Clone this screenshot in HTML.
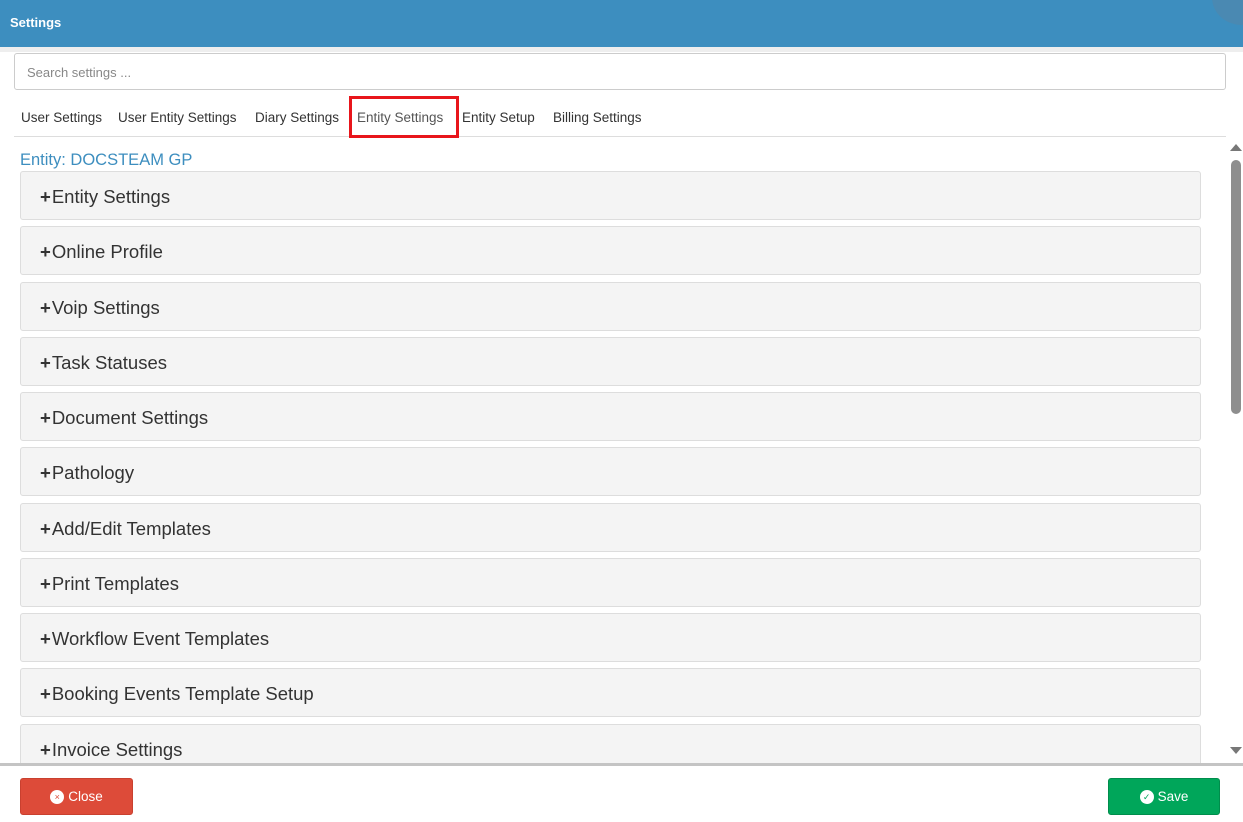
<!DOCTYPE html>
<html><head><style>
*{box-sizing:border-box;margin:0;padding:0}
body{width:1243px;height:822px;overflow:hidden;background:#fff;font-family:"Liberation Sans",sans-serif;position:relative;color:#333}
.hdr{position:absolute;left:0;top:0;width:1243px;height:47px;background:#3d8ebf}
.hdr span{position:absolute;left:10px;top:15px;color:#fff;font-weight:bold;font-size:13px}
.circ{position:absolute;left:1212px;top:-30px;width:60px;height:55px;border-radius:50%;background:#5088ad;opacity:.7}
.strip{position:absolute;left:0;top:47px;width:1243px;height:5px;background:#eee}
.search{position:absolute;left:14px;top:53px;width:1212px;height:37px;border:1px solid #ccc;border-radius:3px;font-size:13px;color:#888;padding:11px 12px}
.tabs{position:absolute;left:14px;top:110px;font-size:13.5px;color:#333;white-space:nowrap}
.tabs span{position:absolute;top:0}
.tabline{position:absolute;left:14px;top:136px;width:1212px;height:1px;background:#ddd}
.redbox{position:absolute;left:349px;top:96px;width:110px;height:42px;border:3px solid #e8151b}
.entity{position:absolute;left:20px;top:151px;color:#3d8ebf;font-size:16.5px}
.panel{position:absolute;left:20px;width:1181px;height:49px;background:#f4f4f4;border:1px solid #ddd;border-radius:3px;font-size:18.5px;color:#333;padding:14px 0 0 19px}
.panel b{font-weight:bold;margin-right:1px}
.sb{position:absolute;left:1229px;top:140px;width:14px;height:624px;background:#fff}
.thumb{position:absolute;left:1231px;top:160px;width:10px;height:254px;background:#8e8e8e;border-radius:5px}
.foot{position:absolute;left:0;top:763px;width:1243px;height:3px;background:#c4c4c4}
.below{position:absolute;left:0;top:766px;width:1243px;height:56px;background:#fff}
.btn{position:absolute;top:778px;height:37px;border-radius:3px;color:#fff;font-size:13.5px;display:flex;align-items:center;justify-content:center}
.ic{display:inline-block;width:14px;height:14px;border-radius:50%;background:#fff;margin-right:4px;font-size:9px;text-align:center;line-height:14px}
</style></head><body>
<div class="hdr"><span>Settings</span><div class="circ"></div></div>
<div class="strip"></div>
<div class="search">Search settings ...</div>
<div class="tabs">
<span style="left:7px">User Settings</span>
<span style="left:104px">User Entity Settings</span>
<span style="left:241px">Diary Settings</span>
<span style="left:343px;color:#555">Entity Settings</span>
<span style="left:448px">Entity Setup</span>
<span style="left:539px">Billing Settings</span>
</div>
<div class="tabline"></div>
<div class="redbox"></div>
<div class="entity">Entity: DOCSTEAM GP</div>
<div class="panel" style="top:171px"><b>+</b>Entity Settings</div>
<div class="panel" style="top:226px"><b>+</b>Online Profile</div>
<div class="panel" style="top:282px"><b>+</b>Voip Settings</div>
<div class="panel" style="top:337px"><b>+</b>Task Statuses</div>
<div class="panel" style="top:392px"><b>+</b>Document Settings</div>
<div class="panel" style="top:447px"><b>+</b>Pathology</div>
<div class="panel" style="top:503px"><b>+</b>Add/Edit Templates</div>
<div class="panel" style="top:558px"><b>+</b>Print Templates</div>
<div class="panel" style="top:613px"><b>+</b>Workflow Event Templates</div>
<div class="panel" style="top:668px"><b>+</b>Booking Events Template Setup</div>
<div class="panel" style="top:724px"><b>+</b>Invoice Settings</div>
<div class="sb"></div>
<div style="position:absolute;left:1230px;top:144px;width:0;height:0;border-left:6px solid transparent;border-right:6px solid transparent;border-bottom:7px solid #777"></div>
<div class="thumb"></div>
<div style="position:absolute;left:1230px;top:747px;width:0;height:0;border-left:6px solid transparent;border-right:6px solid transparent;border-top:7px solid #777"></div>
<div class="below"></div>
<div class="foot"></div>
<div class="btn" style="left:20px;width:113px;background:#dd4b39;border:1px solid #c9402f"><span class="ic" style="color:#dd4b39">×</span>Close</div>
<div class="btn" style="left:1108px;width:112px;background:#00a65a;border:1px solid #008d4c"><span class="ic" style="color:#00a65a">✓</span>Save</div>
</body></html>
